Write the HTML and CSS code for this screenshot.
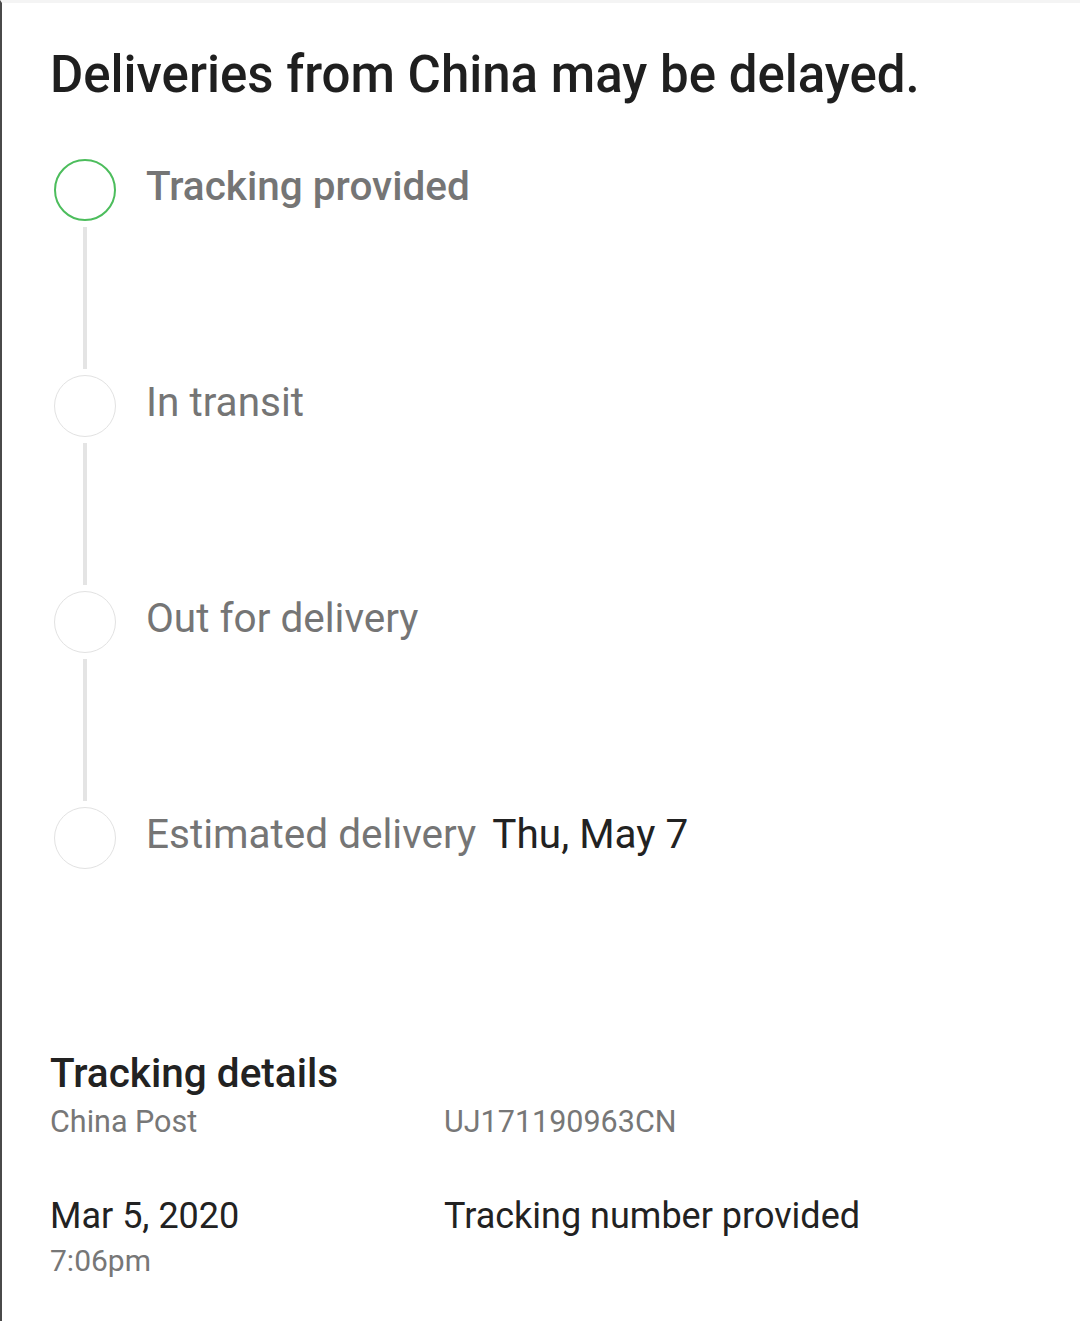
FILE: index.html
```html
<!DOCTYPE html>
<html lang="en">
<head>
<meta charset="utf-8">
<title>Tracking</title>
<link rel="stylesheet" href="styles.css">
</head>
<body>
<div class="page">
  <h1 class="notice">Deliveries from China may be delayed.</h1>

  <ol class="timeline">
    <li class="step done">
      <div class="rail"><span class="dot"></span><span class="line"></span></div>
      <div class="label strong">Tracking provided</div>
    </li>
    <li class="step">
      <div class="rail"><span class="dot"></span><span class="line"></span></div>
      <div class="label">In transit</div>
    </li>
    <li class="step">
      <div class="rail"><span class="dot"></span><span class="line"></span></div>
      <div class="label">Out for delivery</div>
    </li>
    <li class="step last">
      <div class="rail"><span class="dot"></span></div>
      <div class="label">Estimated delivery <span class="date">Thu, May 7</span></div>
    </li>
  </ol>

  <section class="details">
    <h2 class="details-title">Tracking details</h2>
    <div class="row carrier">
      <div class="col-a muted">China Post</div>
      <div class="col-b muted">UJ171190963CN</div>
    </div>
    <div class="row event">
      <div class="col-a">
        <div class="ev-date">Mar 5, 2020</div>
        <div class="ev-time">7:06pm</div>
      </div>
      <div class="col-b ev-desc">Tracking number provided</div>
    </div>
  </section>
</div>
</body>
</html>
```

FILE: styles.css
```css
html, body {
  margin: 0;
  padding: 0;
  background: #ffffff;
}
body {
  font-family: Roboto, "Noto Sans", "Liberation Sans", sans-serif;
  color: #212121;
  border-left: 2px solid #4a4a4a;
  border-top: 3px solid #f4f4f4;
  min-height: 100vh;
  box-sizing: border-box;
}
.page {
  padding: 0 0 0 48px;
}
.notice {
  margin: 0;
  padding-top: 42px;
  font-size: 51px;
  line-height: 60px;
  font-weight: 500;
  color: #1f1f1f;
}
.timeline {
  list-style: none;
  margin: 54px 0 0 0;
  padding: 0;
}
.step {
  display: flex;
  align-items: flex-start;
}
.rail {
  width: 66px;
  display: flex;
  flex-direction: column;
  align-items: center;
  margin-left: 2px;
  margin-right: 28px;
}
.dot {
  width: 62px;
  height: 62px;
  box-sizing: border-box;
  border-radius: 50%;
  border: 1.5px solid #e2e2e2;
}
.done .dot {
  border: 2.5px solid #4cbd5c;
}
.line {
  width: 4px;
  height: 142px;
  margin: 6px 0;
  background: #e4e4e4;
}
.label {
  font-size: 40.5px;
  line-height: 54px;
  color: #757575;
  font-weight: 400;
}
.label.strong {
  font-weight: 500;
}
.date {
  color: #222222;
  margin-left: 6px;
}
.details {
  margin-top: 180px;
}
.details-title {
  margin: 0;
  font-size: 40.5px;
  line-height: 48px;
  font-weight: 500;
  color: #222222;
}
.row {
  display: flex;
}
.col-a {
  width: 394px;
}
.muted {
  color: #777777;
  font-size: 30.5px;
  line-height: 38px;
}
.carrier {
  margin-top: 6px;
}
.event {
  margin-top: 53px;
}
.ev-date {
  font-size: 36px;
  line-height: 44px;
  color: #222222;
}
.ev-time {
  margin-top: 3px;
  font-size: 30px;
  line-height: 40px;
  color: #777777;
}
.ev-desc {
  font-size: 36px;
  line-height: 44px;
  color: #222222;
}
```
